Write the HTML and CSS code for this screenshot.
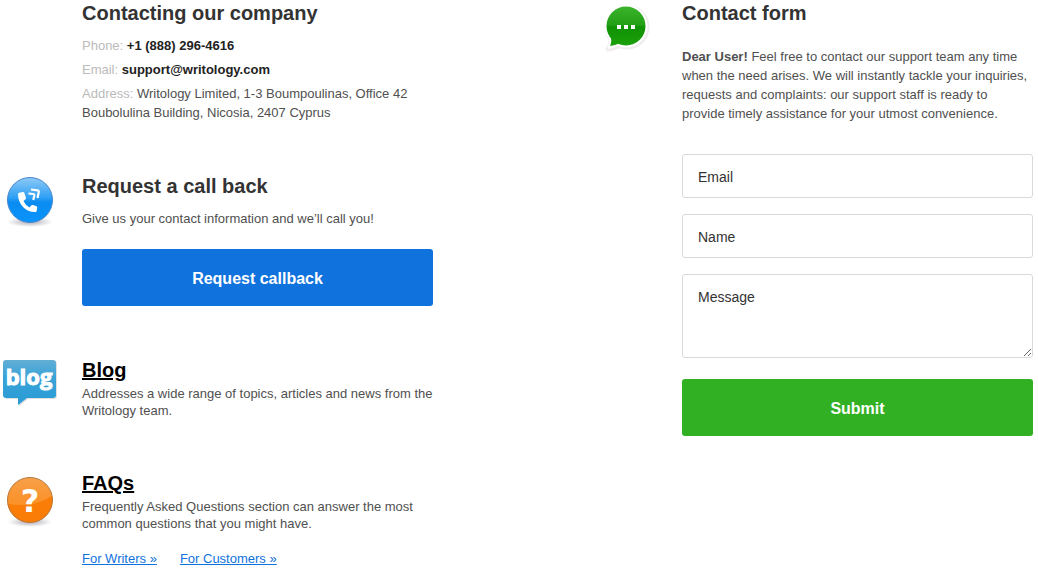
FILE: index.html
```html
<!DOCTYPE html>
<html lang="en">
<head>
    <meta charset="UTF-8">
    <meta name="viewport" content="width=device-width, initial-scale=1">
    <title>Contact us - Writology</title>
    <link rel="stylesheet" href="styles.css">
</head>
<body>

    <main class="contacts">
        <div class="column">
            <section class="block company">
                <div class="block-body">
                    <h2>Contacting our company</h2>
                    <p class="detail"><span class="caption">Phone:</span> <b>+1 (888) 296-4616</b></p>
                    <p class="detail"><span class="caption">Email:</span> <b>support@writology.com</b></p>
                    <p class="detail"><span class="caption">Address:</span> Writology Limited, 1-3 Boumpoulinas, Office 42 Boubolulina Building, Nicosia, 2407 Cyprus</p>
                </div>
            </section>

            <section class="block callback">
                <svg class="icon" viewBox="0 0 60 60" aria-hidden="true">
                    <defs>
                        <linearGradient id="blueFill" x1="0" y1="0" x2="0" y2="1">
                            <stop offset="0" stop-color="#8dcaf5"/>
                            <stop offset="0.45" stop-color="#2fa0f4"/>
                            <stop offset="0.55" stop-color="#0a8cf2"/>
                            <stop offset="1" stop-color="#0a94fb"/>
                        </linearGradient>
                        <radialGradient id="shadow">
                            <stop offset="0.3" stop-color="#8f8a99" stop-opacity="0.5"/>
                            <stop offset="1" stop-color="#8f8a99" stop-opacity="0"/>
                        </radialGradient>
                    </defs>
                    <ellipse cx="30" cy="49" rx="23" ry="5" fill="url(#shadow)"/>
                    <circle cx="30" cy="27" r="22.5" fill="url(#blueFill)" stroke="#4a86c8"/>
                    <path d="M18 21 Q18 20 19 19.700 L23 19 Q24 19 24.400 20 L26 25 Q26 26 25.200 26.600 L23.500 28 Q25.500 32.500 29.500 34.500 L31.200 32.500 Q32 31.700 33 32 L36.500 33.300 Q37.300 33.700 37.200 34.600 L36.700 38 Q36.500 39 35.500 39 Q28 39.300 23 34 Q18 28.500 18 21z" fill="#fff"/>
                    <path d="M28.500 20.500 L33 21 Q34.500 21.200 34.300 22.500 L33.300 27 M31 16.500 L37.500 17.400 Q39 17.600 38.800 19 L37.500 25" fill="none" stroke="#fff" stroke-width="2.2"/>
                </svg>
                <div class="block-body">
                    <h2>Request a call back</h2>
                    <p class="detail">Give us your contact information and we’ll call you!</p>
                    <button type="button" class="btn btn-blue">Request callback</button>
                </div>
            </section>

            <section class="block blog">
                <svg class="icon" viewBox="0 0 60 60" aria-hidden="true">
                    <defs>
                        <linearGradient id="blogFill" x1="0" y1="0" x2="0" y2="1">
                            <stop offset="0" stop-color="#62aed4"/>
                            <stop offset="0.4" stop-color="#38a3d8"/>
                            <stop offset="1" stop-color="#299bd5"/>
                        </linearGradient>
                    </defs>
                    <path d="M6 4 H54 q3 0 3 3 V39 q0 3 -3 3 H28 L19 49 V42 H6z" fill="#e2dee1"/>
                    <path d="M5 3 H53 q3 0 3 3 V38 q0 3 -3 3 H27 L18 48 V41 H6 q-3 0 -3 -3 V6 q0 -3 3 -3z" fill="url(#blogFill)"/>
                    <text class="blog-text" x="29" y="28" text-anchor="middle">blog</text>
                </svg>
                <div class="block-body">
                    <h2><a href="#blog">Blog</a></h2>
                    <p>Addresses a wide range of topics, articles and news from the Writology team.</p>
                </div>
            </section>

            <section class="block faqs">
                <svg class="icon" viewBox="0 0 60 60" aria-hidden="true">
                    <defs>
                        <linearGradient id="orangeFill" x1="0" y1="0" x2="0" y2="1">
                            <stop offset="0" stop-color="#f7a04a"/>
                            <stop offset="0.5" stop-color="#fa932c"/>
                            <stop offset="1" stop-color="#fa8c1c"/>
                        </linearGradient>
                    </defs>
                    <ellipse cx="30" cy="52" rx="22" ry="5" fill="url(#shadow)"/>
                    <circle cx="30" cy="30" r="22.500" fill="url(#orangeFill)"/>
                    <path d="M7.500 34 Q34 38 52 26 A22.500 22.500 0 0 1 7.500 34z" fill="#f97d07"/>
                    <circle cx="30" cy="30" r="22.500" fill="none" stroke="#b5783f"/>
                    <text class="question-text" x="30" y="42" text-anchor="middle">?</text>
                </svg>
                <div class="block-body">
                    <h2><a href="#faqs">FAQs</a></h2>
                    <p>Frequently Asked Questions section can answer the most common questions that you might have.</p>
                    <nav class="links">
                        <a href="#writers">For Writers »</a>
                        <a href="#customers">For Customers »</a>
                    </nav>
                </div>
            </section>
        </div>

        <div class="column">
            <section class="block">
                <svg class="icon" viewBox="0 0 60 60" aria-hidden="true">
                    <defs>
                        <linearGradient id="greenFill" gradientUnits="userSpaceOnUse" x1="0" y1="6" x2="0" y2="46">
                            <stop offset="0" stop-color="#3bb42c"/>
                            <stop offset="0.48" stop-color="#239f15"/>
                            <stop offset="0.52" stop-color="#109103"/>
                            <stop offset="1" stop-color="#1ba10b"/>
                        </linearGradient>
                    </defs>
                    <g fill="#fff" stroke="#f1edef" stroke-width="5" stroke-linejoin="round">
                        <circle cx="27" cy="27" r="20"/>
                        <path d="M11 37 Q12 45 8 49 Q16 48 22 44z"/>
                    </g>
                    <g fill="#fff" stroke="#fff" stroke-width="3" stroke-linejoin="round">
                        <circle cx="26" cy="26" r="20"/>
                        <path d="M10 36 Q12 43 9 47 Q15 46 20 43z"/>
                    </g>
                    <g fill="url(#greenFill)">
                        <circle cx="26" cy="26" r="19.500"/>
                        <path d="M10 35 Q12.500 41 10 46 Q15 45.500 20 43z"/>
                    </g>
                    <path d="M17 25 h4 v4 h-4z M24 25 h4 v4 h-4z M31 25 h4 v4 h-4z" fill="#fff"/>
                </svg>
                <div class="block-body">
                    <h2>Contact form</h2>
                    <form class="contact-form">
                        <p class="intro"><b>Dear User!</b> Feel free to contact our support team any time when the need arises. We will instantly tackle your inquiries, requests and complaints: our support staff is ready to provide timely assistance for your utmost convenience.</p>
                        <input type="email" class="field" placeholder="Email" aria-label="Email" required>
                        <input type="text" class="field" placeholder="Name" aria-label="Name" required>
                        <textarea class="field message" placeholder="Message" aria-label="Message" required></textarea>
                        <button type="submit" class="btn btn-green">Submit</button>
                    </form>
                </div>
            </section>
        </div>
    </main>

</body>
</html>
```
FILE: styles.css
```css
* {
    box-sizing: border-box;
}

body {
    margin: 0;
    background-color: #fff;
    color: #505050;
    font-family: Arial, "Liberation Sans", sans-serif;
    font-size: 13px;
    line-height: 17px;
}

h2, p {
    margin: 0;
}

h2 {
    color: #333;
    font-size: 20px;
    line-height: 26px;
}

h2 a {
    color: #000;
}

.contacts {
    display: grid;
    grid-template-columns: 1fr 1fr;
    column-gap: 167px;
    padding-right: 5px;
}

.block {
    display: grid;
    grid-template-columns: 60px 1fr;
    column-gap: 22px;
    align-items: start;
}

.block-body {
    grid-column: 2;
}

.icon {
    display: block;
    width: 60px;
    height: 60px;
}

/* Left column */
.company {
    margin-bottom: 51px;
}

.company h2,
.callback h2 {
    margin-bottom: 10px;
}

.detail {
    line-height: 19px;
}

.detail + .detail {
    margin-top: 5px;
}

.detail b {
    color: #222;
}

.caption {
    color: #bbb;
}

.callback,
.blog {
    margin-bottom: 51px;
}

.blog h2,
.faqs h2 {
    margin-bottom: 2px;
}

.links {
    display: flex;
    gap: 23px;
    margin-top: 18px;
}

.links a {
    color: #1072dc;
}

/* Form */
.intro {
    margin: 21px 0 15px;
    line-height: 19px;
}

.contact-form {
    display: flex;
    flex-direction: column;
    gap: 16px;
}

.field {
    width: 100%;
    height: 44px;
    padding: 2px 15px 0;
    border: 1px solid #d9d9d9;
    border-radius: 3px;
    background-color: #fff;
    color: #333;
    font: 14px/20px Arial, "Liberation Sans", sans-serif;
}

.field::placeholder {
    color: #333;
}

.message {
    height: 84px;
    padding: 12px 15px;
}

.btn {
    display: block;
    width: 100%;
    height: 57px;
    padding: 2px 0 0;
    border: none;
    border-radius: 3px;
    color: #fff;
    font: bold 16px/20px Arial, "Liberation Sans", sans-serif;
    cursor: pointer;
}

.btn-blue {
    margin-top: 21px;
    background-color: #1072dc;
}

.btn-green {
    margin-top: 5px;
    background-color: #31b024;
}

/* Lettering inside the icons */
.blog-text,
.question-text {
    fill: #fff;
    font-weight: bold;
}

.blog-text {
    font-family: "Open Sans", sans-serif;
    font-size: 22px;
    stroke: #fff;
}

.question-text {
    font-family: "DejaVu Sans", sans-serif;
    font-size: 32px;
}
```
